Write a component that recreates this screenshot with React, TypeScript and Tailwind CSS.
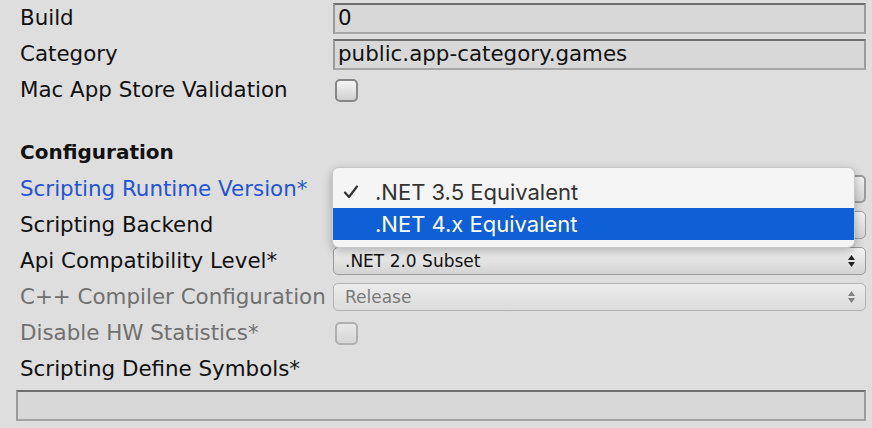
import React from 'react';

const LABEL = "font-['DejaVu_Sans',sans-serif] text-[21.4px] leading-none";

const TextField: React.FC<{ value?: string; className?: string }> = ({ value, className = '' }) => (
  <div className={`h-[31px] border-2 border-t-[#6f6f6f] border-l-[#9a9a9a] border-r-[#9a9a9a] border-b-[#a6a6a6] bg-[#d8d8d8] flex items-center pl-[3px] ${className}`}>
    <span className={`${LABEL} text-[#111] whitespace-nowrap`}>{value}</span>
  </div>
);

const Arrows: React.FC = () => (
  <svg width="9" height="14" viewBox="0 0 9 14" className="shrink-0">
    <path d="M4.5 1 L8 6 L1 6 Z" fill="#222" />
    <path d="M1 8 L8 8 L4.5 13 Z" fill="#222" />
  </svg>
);

const Dropdown: React.FC<{ value?: string; disabled?: boolean; focus?: boolean }> = ({ value, disabled, focus }) => (
  <div
    className={`flex-1 h-[28px] rounded-[5px] flex items-center justify-between pl-[11px] pr-[9px] bg-gradient-to-b ${
      disabled ? 'from-[#ececec] to-[#dcdcdc] border border-[#b4b4b4]' : 'from-[#f4f4f4] to-[#d3d3d3] border border-[#9b9b9b]'
    } ${focus ? 'border-2 border-[#3d6ee6]' : ''}`}
  >
    <span className={`font-['DejaVu_Sans',sans-serif] text-[17px] leading-none ${disabled ? 'text-[#7a7a7a]' : 'text-[#111]'}`}>{value}</span>
    <span className={disabled ? 'opacity-50' : ''}><Arrows /></span>
  </div>
);

const Checkbox: React.FC<{ disabled?: boolean }> = ({ disabled }) => (
  <div
    className={`ml-[2px] w-[23px] h-[23px] rounded-[5px] border-2 bg-gradient-to-b ${
      disabled ? 'border-[#b0b0b0] from-[#e8e8e8] to-[#d6d6d6]' : 'border-[#868686] from-[#f6f6f6] to-[#d0d0d0]'
    }`}
  />
);

const Row: React.FC<{ label: string; tone?: 'normal' | 'blue' | 'gray'; h?: string; children?: React.ReactNode }> = ({
  label,
  tone = 'normal',
  h = 'h-[36px]',
  children,
}) => {
  const color = tone === 'blue' ? 'text-[#2454d6]' : tone === 'gray' ? 'text-[#707070]' : 'text-[#111]';
  return (
    <div className={`${h} flex items-center pl-[20px] pr-[6px]`}>
      <div className={`w-[313px] shrink-0 ${LABEL} ${color} whitespace-nowrap`}>{label}</div>
      <div className="flex-1 flex items-center">{children}</div>
    </div>
  );
};

const App: React.FC = () => {
  return (
    <div className="relative w-[872px] h-[428px] bg-[#dedede] overflow-hidden">
      <Row label="Build">
        <TextField value="0" className="flex-1" />
      </Row>
      <Row label="Category">
        <TextField value="public.app-category.games" className="flex-1" />
      </Row>
      <Row label="Mac App Store Validation">
        <Checkbox />
      </Row>
      <div className="h-[24px]" />
      <div className="h-[39px] flex items-center pl-[20px]">
        <span className="font-['DejaVu_Sans',sans-serif] font-bold text-[20px] leading-none text-[#111]">Configuration</span>
      </div>
      {/* values of these two are hidden under the open menu */}
      <Row label="Scripting Runtime Version*" tone="blue">
        <Dropdown focus />
      </Row>
      <Row label="Scripting Backend">
        <Dropdown />
      </Row>
      <Row label="Api Compatibility Level*">
        <Dropdown value=".NET 2.0 Subset" />
      </Row>
      <Row label="C++ Compiler Configuration" tone="gray">
        <Dropdown value="Release" disabled />
      </Row>
      <Row label="Disable HW Statistics*" tone="gray">
        <Checkbox disabled />
      </Row>
      <Row label="Scripting Define Symbols*">{null}</Row>
      <div className="pl-[16px] pr-[6px] mt-[3px]">
        <TextField className="h-[30px]" />
      </div>

      {/* open popup menu for Scripting Runtime Version */}
      <div className="absolute left-[332px] top-[167px] w-[523px] rounded-[7px] bg-[#f5f5f5] pt-[8px] pb-[7px] shadow-[0_3px_10px_rgba(0,0,0,0.28)] border border-[#c8c8c8] font-['Inter',sans-serif] text-[22px] leading-none">
        <div className="h-[32px] flex items-center text-[#333]">
          <svg width="16" height="14" viewBox="0 0 16 14" className="ml-[10px] mr-[16px]">
            <path d="M2 7.5 L6 12 L14 1.5" fill="none" stroke="#333" strokeWidth="2.2" strokeLinecap="round" strokeLinejoin="round" />
          </svg>
          <span>.NET 3.5 Equivalent</span>
        </div>
        <div className="h-[32px] flex items-center bg-[#0f5fd7] text-white pl-[42px]">
          <span>.NET 4.x Equivalent</span>
        </div>
      </div>
    </div>
  );
};

export default App;
